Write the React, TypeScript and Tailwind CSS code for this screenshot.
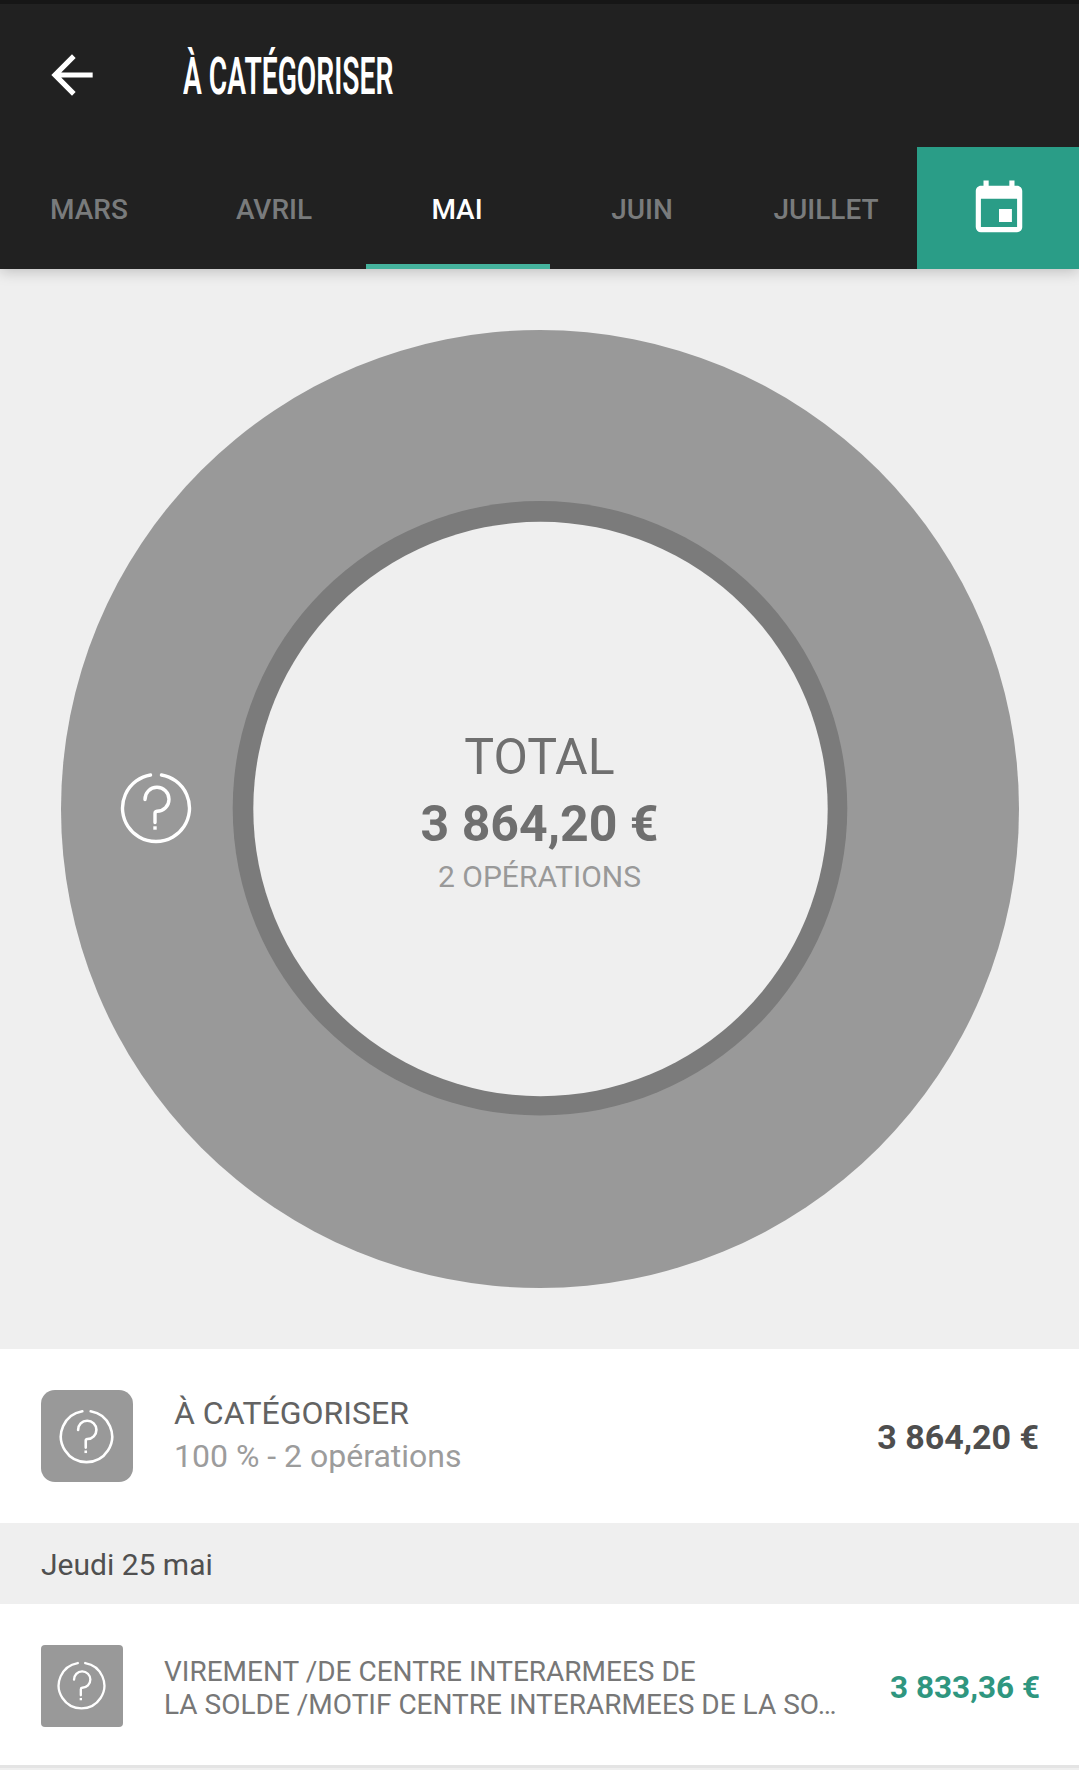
import React, { useState } from "react";
import clsx from "clsx";
import { MdArrowBack, MdEvent } from "react-icons/md";

const MONTHS = ["MARS", "AVRIL", "MAI", "JUIN", "JUILLET"];

interface QuestionIconProps {
  className?: string;
}

const QuestionIcon: React.FC<QuestionIconProps> = ({ className }) => (
  <svg
    viewBox="-36 -36 72 72"
    fill="none"
    stroke="white"
    strokeWidth={3.4}
    strokeLinecap="round"
    className={className}
  >
    <path d="M5.5 -33A33.5 33.5 0 1 1 -5.5 -33" />
    <path d="M-11 -8.5A12 12 0 1 1 1 3.3Q-1 3.5 -1 5.5V14.5" />
    <path d="M-1 20h.01" strokeLinecap="square" />
  </svg>
);

const Header = () => {
  const [month, setMonth] = useState("MAI");

  return (
    <header className="relative h-[269px] border-t-4 border-[#161616] bg-[#212121] shadow-[0_2px_14px_rgba(0,0,0,0.22)]">
      <div className="flex h-[143px] items-center pl-[41px]">
        <button className="-mt-[1px] text-white">
          <MdArrowBack className="size-[62px]" />
        </button>
        <h1 className="mt-[2px] ml-[80px] origin-left scale-x-[0.553] whitespace-nowrap text-[51px] leading-none font-semibold text-white">
          À CATÉGORISER
        </h1>
      </div>

      <div className="flex h-[122px]">
        <nav className="flex w-[917px] overflow-hidden">
          {MONTHS.map((name) => (
            <button
              key={name}
              onClick={() => setMonth(name)}
              className={clsx(
                "w-[184px] shrink-0 border-b-[5px] pt-[8px] text-[28px] font-medium first:-ml-[2px] first:pr-[2px]",
                name === month
                  ? "border-[#45b39d] pr-[2px] text-white"
                  : "border-transparent text-[#797b7c]"
              )}
            >
              {name}
            </button>
          ))}
        </nav>
        <button className="flex flex-1 items-center justify-center bg-[#2a9d87] pt-[1px] pl-[1px] text-white">
          <MdEvent className="size-[62px]" />
        </button>
      </div>
    </header>
  );
};

const Donut = () => (
  <section className="relative flex h-[1080px] items-center justify-center">
    <svg viewBox="0 0 958 958" className="-mt-[1px] size-[958px]">
      <circle cx="479" cy="479" r="479" fill="#999999" />
      <circle cx="479" cy="478.3" r="307.3" fill="#7b7b7b" />
      <circle cx="479.5" cy="479" r="287.2" fill="#efefef" />
    </svg>
    <QuestionIcon className="absolute top-[503px] left-[120px] size-[72px]" />
    <div className="absolute inset-0 flex flex-col items-center justify-center pt-[2px] text-[#6f6f6f]">
      <p className="text-[50px] leading-[67px]">TOTAL</p>
      <p className="text-[50px] leading-[67px] font-bold">3 864,20 €</p>
      <p className="-mt-[1px] text-[30px] leading-[39px] text-[#999999]">
        2 OPÉRATIONS
      </p>
    </div>
  </section>
);

export default function App() {
  return (
    <div className="h-[1770px] w-[1079px] overflow-hidden bg-[#efefef] font-['Roboto',sans-serif]">
      <Header />
      <Donut />

      <section className="flex h-[174px] items-center bg-white pr-[40px] pl-[41px]">
        <div className="flex size-[92px] items-center justify-center rounded-[14px] bg-[#999999] pr-[1px]">
          <QuestionIcon className="size-[55px]" />
        </div>
        <div className="-mt-[3px] ml-[41px] flex-1 text-[32px] leading-[43px]">
          <p className="text-[#636363]">À CATÉGORISER</p>
          <p className="text-[#9c9c9c]">100 % - 2 opérations</p>
        </div>
        <p className="mt-[3px] text-[34px] font-bold text-[#4e4e4e]">
          3 864,20 €
        </p>
      </section>

      <h2 className="h-[81px] px-[41px] text-[30px] leading-[83px] text-[#505050]">
        Jeudi 25 mai
      </h2>

      <section className="flex h-[164px] items-center border-b-[3px] border-[#e4e4e4] bg-white pr-[39px] pl-[41px]">
        <div className="mt-[3px] flex size-[82px] items-center justify-center rounded-[4px] bg-[#999999] pr-[1px] pb-[1px]">
          <QuestionIcon className="size-[49px]" />
        </div>
        <p className="mt-[6px] ml-[41px] flex-1 text-[28px] leading-[33px] whitespace-nowrap text-[#777777]">
          VIREMENT /DE CENTRE INTERARMEES DE
          <br />
          LA SOLDE /MOTIF CENTRE INTERARMEES DE LA SO…
        </p>
        <p className="mt-[7px] text-[31.5px] font-bold text-[#2f967f]">
          3 833,36 €
        </p>
      </section>
    </div>
  );
}
